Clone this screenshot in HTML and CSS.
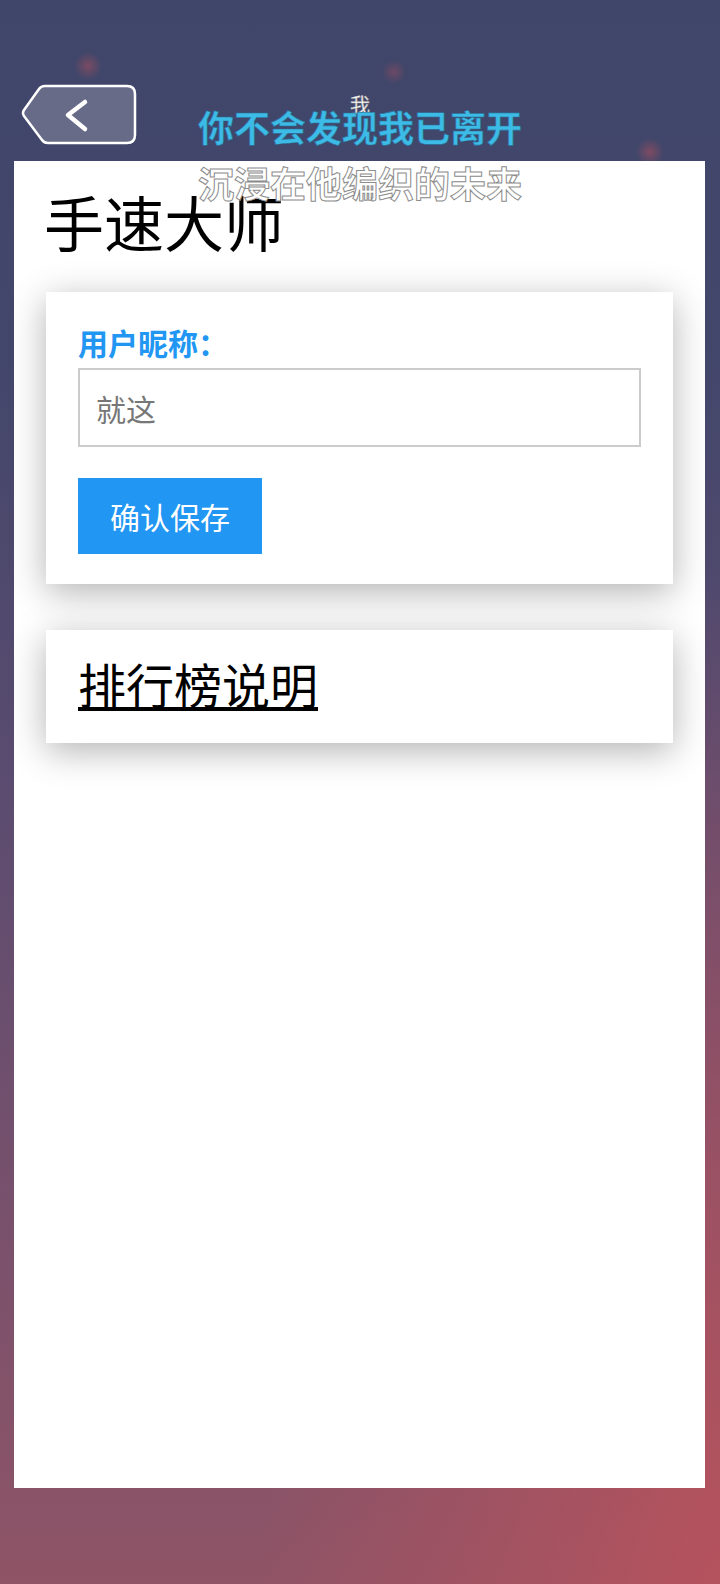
FILE: index.html
```html
<!DOCTYPE html>
<html lang="zh-CN">
<head>
    <meta charset="UTF-8">
    <meta name="viewport" content="width=device-width, initial-scale=1.0">
    <title>手速大师</title>
    <!--styling the page-->
    <link rel="stylesheet" href="styles.css">
</head>
<body>
    <header class="topbar">
        <a class="back-btn" href="#" aria-label="返回">
            <svg width="116" height="62" viewBox="0 0 116 62">
                <path d="M24 2 H106 Q114 2 114 10 V51 Q114 59 106 59 H27 Q23 59 21 56 L3 32 Q1 29 3 26 L18 5 Q20 2 24 2 Z" fill="rgba(255,255,255,0.2)" stroke="#fff" stroke-width="2.5" stroke-linejoin="round"/>
                <path d="M64 18 L47 31 L64 45" fill="none" stroke="#fff" stroke-width="4.5" stroke-linecap="round" stroke-linejoin="round"/>
            </svg>
        </a>
    </header>

    <main class="panel">
        <h1 class="title">手速大师</h1>

        <section class="card">
            <p class="label">用户昵称：</p>
            <input type="text" class="nick-input" placeholder="就这">
            <button type="button" class="save-btn">确认保存</button>
        </section>

        <section class="card card-link">
            <a href="#" class="rank-link">排行榜说明</a>
        </section>
    </main>

    <!--floating lyrics overlay-->
    <div class="lyrics">
        <div class="lyric-mark">我</div>
        <div class="lyric-main">你不会发现我已离开</div>
        <div class="lyric-next">沉浸在他编织的未来</div>
    </div>
</body>
</html>
```

FILE: styles.css
```css
*{
    margin:0;
    box-sizing: border-box;
}
body{
    font-family: "Noto Sans CJK SC", "Noto Sans", sans-serif;
    min-height: 1584px;
    background:
        radial-gradient(circle at 88px 66px, rgba(190,80,90,0.45) 0, rgba(190,80,90,0) 14px),
        radial-gradient(circle at 394px 72px, rgba(190,80,90,0.35) 0, rgba(190,80,90,0) 12px),
        radial-gradient(circle at 650px 152px, rgba(200,80,90,0.45) 0, rgba(200,80,90,0) 14px),
        radial-gradient(ellipse at 100% 100%, rgba(185,82,92,0.9) 0, rgba(185,82,92,0) 45%),
        linear-gradient(180deg, #40466a 0%, #42476b 22%, #5b4c70 50%, #7a516c 78%, #8f5466 100%);
    position: relative;
}
.topbar
{
    height: 161px;
    padding: 84px 0 0 21px;
}
.back-btn{
    display: block;
    width: 116px;
    height: 62px;
}
.back-btn svg{
    display: block;
}
.panel{
    background-color: #ffffff;
    margin-left: 14px;
    width: 691px;
    height: 1327px;
    padding: 24px 32px;
}
.title{
    font-size: 60px;
    font-weight: 400;
    line-height: 72px;
    color: #000;
    margin-left: -2px;
}
.card{
    background-color: #ffffff;
    box-shadow: 0 8px 34px rgba(0, 0, 0, 0.3);
    margin-top: 35px;
    padding: 31px 32px 30px;
}
.label{
    font-size: 30px;
    font-weight: 700;
    line-height: 38px;
    color: #2196f3;
}
.nick-input{
    display: block;
    width: 100%;
    height: 79px;
    margin-top: 7px;
    border: 2px solid #cccccc;
    padding: 0 16px;
    font-family: inherit;
    font-size: 30px;
    outline: none;
}
.nick-input::placeholder{
    color: #777777;
}
.save-btn{
    display: block;
    margin-top: 31px;
    width: 184px;
    height: 76px;
    background-color: #2196f3;
    border: none;
    color: #ffffff;
    font-family: inherit;
    font-size: 30px;
    cursor: pointer;
}
.card-link{
    margin-top: 46px;
    height: 113px;
    padding: 24px 32px 0;
}
.rank-link{
    font-size: 48px;
    line-height: 58px;
    color: #000;
    text-decoration: underline;
    text-decoration-thickness: 4px;
    text-underline-offset: 3px;
}
.lyrics{
    position: absolute;
    top: 95px;
    left: 0;
    right: 0;
    text-align: center;
    pointer-events: none;
}
.lyric-mark{
    font-size: 20px;
    line-height: 20px;
    color: #ffffff;
    -webkit-text-stroke: 0.5px #999;
}
.lyric-main{
    margin-top: -7px;
    font-size: 36px;
    font-weight: 700;
    line-height: 36px;
    color: #3dbbe7;
    -webkit-text-stroke: 0.6px #2b6f98;
}
.lyric-next{
    margin-top: 20px;
    font-size: 36px;
    font-weight: 700;
    line-height: 36px;
    color: #ffffff;
    -webkit-text-stroke: 1px #8c8c8c;
}
```
